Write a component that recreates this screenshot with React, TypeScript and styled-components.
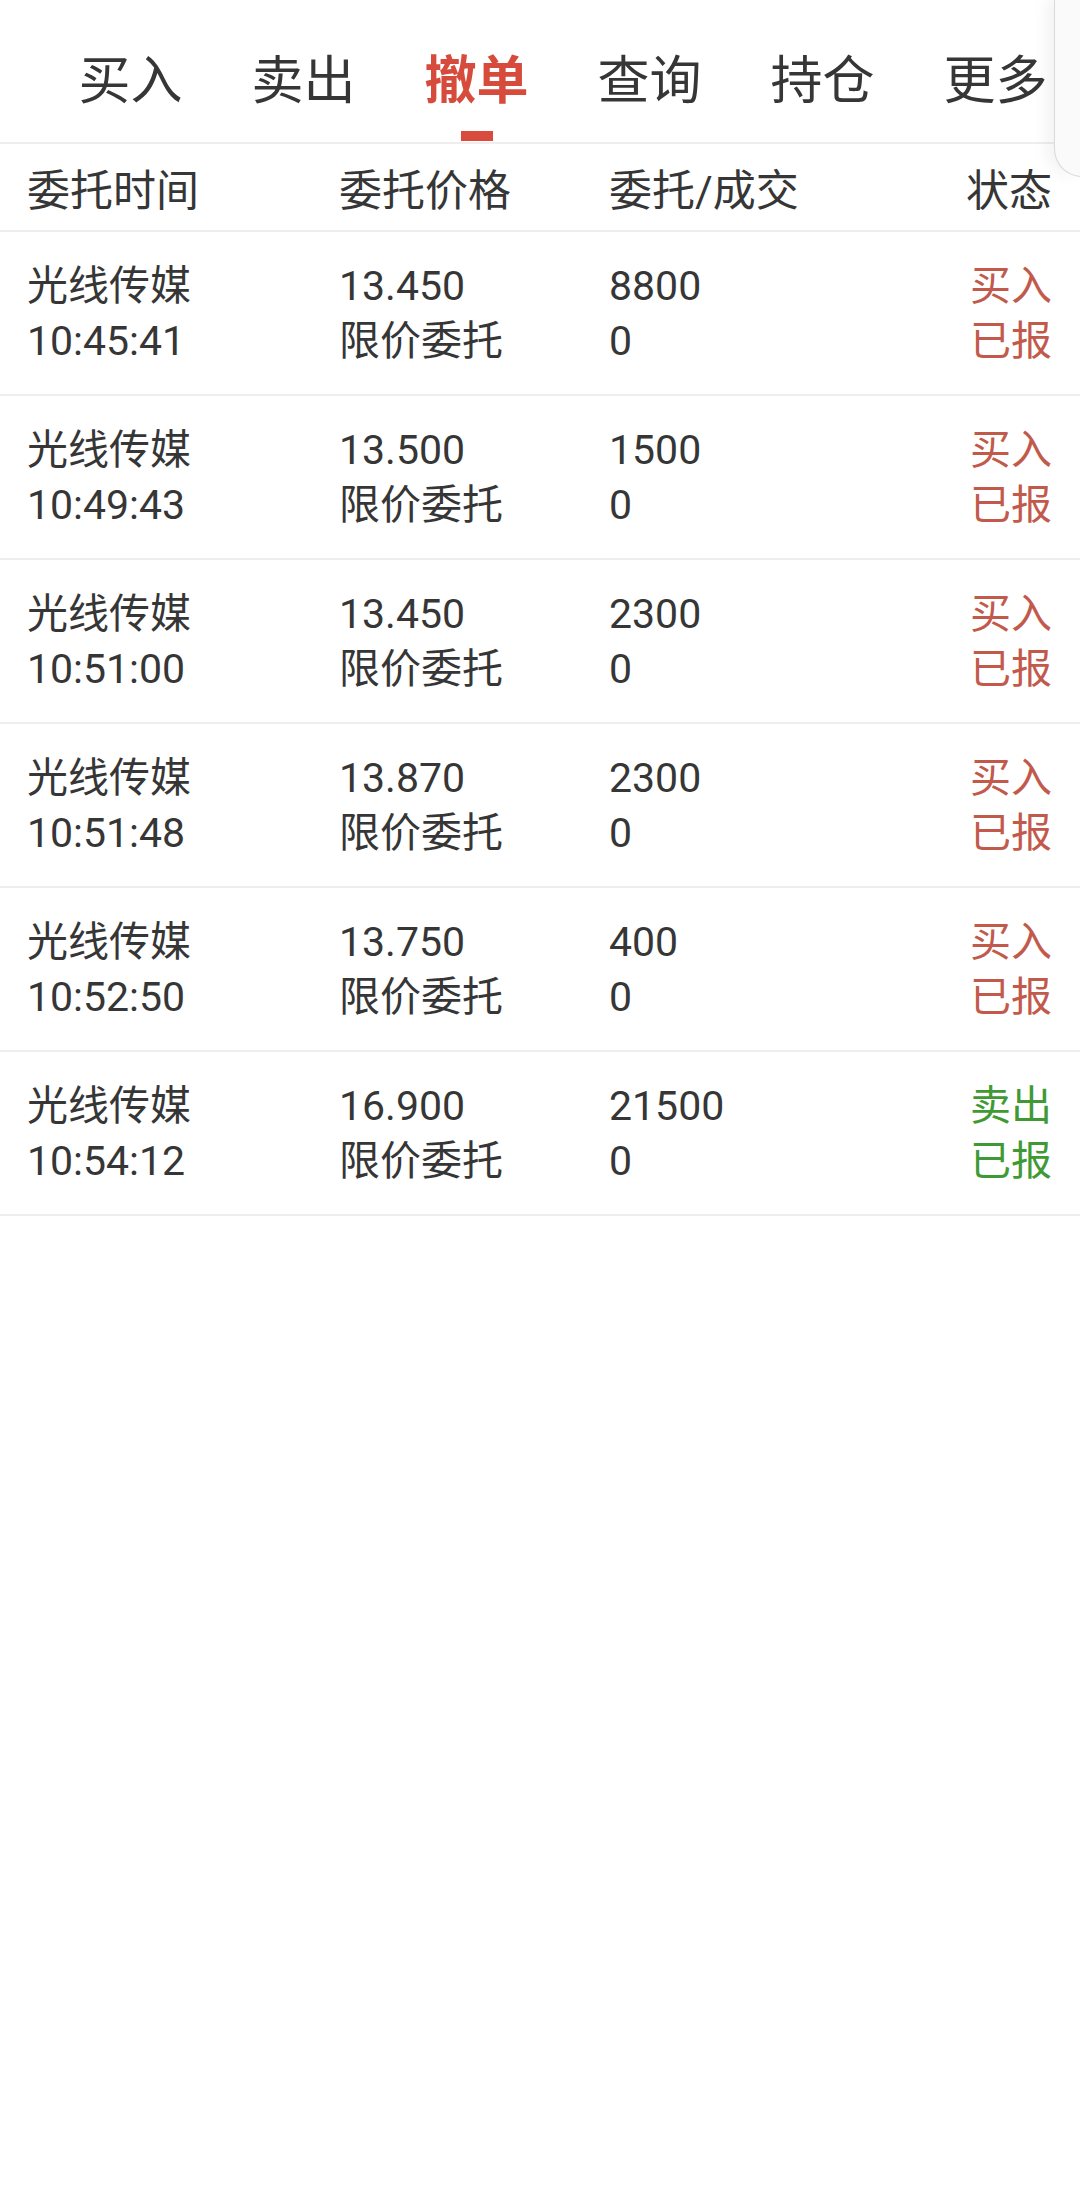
import React from 'react';
import styled, { createGlobalStyle } from 'styled-components';

const GlobalStyle = createGlobalStyle`
    html, body {
        margin: 0;
        padding: 0;
        background: #ffffff;
    }
    body {
        font-family: Roboto, "Noto Sans CJK SC", "Noto Sans", sans-serif;
        color: #363636;
    }
`;

const Page = styled.div`
    position: relative;
    width: 1080px;
    min-height: 2196px;
    background: #ffffff;
    overflow: hidden;
`;

const TabBar = styled.nav`
    display: flex;
    height: 142px;
    padding-left: 44px;
    border-bottom: 2px solid #eeeeee;
`;

const Tab = styled.div<{ $active?: boolean }>`
    width: 173px;
    flex-shrink: 0;
    display: flex;
    flex-direction: column;
    align-items: center;
    padding-top: 56px;
    box-sizing: border-box;
    font-size: 52px;
    line-height: 52px;
    font-weight: ${({ $active }) => ($active ? 700 : 400)};
    color: ${({ $active }) => ($active ? '#d64b3c' : '#363636')};
`;

const Indicator = styled.span`
    width: 32px;
    height: 10px;
    margin-top: 23px;
    background: #d94c3d;
`;

const SidePanel = styled.div`
    position: absolute;
    top: -2px;
    right: -2px;
    width: 26px;
    height: 177px;
    background: #fafafa;
    border: 1.5px solid #d9d9d9;
    border-bottom-left-radius: 30px;
    box-shadow: -8px 0 16px rgba(0, 0, 0, 0.05);
`;

const Grid = styled.div`
    display: grid;
    grid-template-columns: 312px 270px 1fr auto;
    padding: 0 28px 0 27px;
    border-bottom: 2px solid #eeeeee;
`;

const HeaderRow = styled(Grid)`
    height: 86px;
    align-items: center;
    font-size: 43px;
`;

const OrderRow = styled(Grid)`
    padding-top: 27px;
    height: 135px;
    font-size: 41px;
    line-height: 55px;
`;

const Cell = styled.div`
    display: flex;
    flex-direction: column;
    white-space: nowrap;
`;

const StatusCell = styled(Cell)<{ $side: 'buy' | 'sell' }>`
    align-items: flex-end;
    color: ${({ $side }) => ($side === 'buy' ? '#c25a4c' : '#3f9a35')};
`;

const RightHead = styled.div`
    text-align: right;
`;

type Order = {
    name: string;
    time: string;
    price: string;
    qty: string;
    done: string;
    side: 'buy' | 'sell';
};

const orders: Order[] = [
    { name: '光线传媒', time: '10:45:41', price: '13.450', qty: '8800', done: '0', side: 'buy' },
    { name: '光线传媒', time: '10:49:43', price: '13.500', qty: '1500', done: '0', side: 'buy' },
    { name: '光线传媒', time: '10:51:00', price: '13.450', qty: '2300', done: '0', side: 'buy' },
    { name: '光线传媒', time: '10:51:48', price: '13.870', qty: '2300', done: '0', side: 'buy' },
    { name: '光线传媒', time: '10:52:50', price: '13.750', qty: '400', done: '0', side: 'buy' },
    { name: '光线传媒', time: '10:54:12', price: '16.900', qty: '21500', done: '0', side: 'sell' },
];

const tabs = ['买入', '卖出', '撤单', '查询', '持仓', '更多'];

const App: React.FC = () => {
    return (
        <Page>
            <GlobalStyle />
            <TabBar>
                {tabs.map((t) => (
                    <Tab key={t} $active={t === '撤单'}>
                        {t}
                        {t === '撤单' && <Indicator />}
                    </Tab>
                ))}
            </TabBar>
            <SidePanel />
            <HeaderRow>
                <div>委托时间</div>
                <div>委托价格</div>
                <div>委托/成交</div>
                <RightHead>状态</RightHead>
            </HeaderRow>
            {orders.map((o) => (
                <OrderRow key={o.time}>
                    <Cell>
                        <span>{o.name}</span>
                        <span>{o.time}</span>
                    </Cell>
                    <Cell>
                        <span>{o.price}</span>
                        <span>限价委托</span>
                    </Cell>
                    <Cell>
                        <span>{o.qty}</span>
                        <span>{o.done}</span>
                    </Cell>
                    <StatusCell $side={o.side}>
                        <span>{o.side === 'buy' ? '买入' : '卖出'}</span>
                        <span>已报</span>
                    </StatusCell>
                </OrderRow>
            ))}
        </Page>
    );
};

export default App;
